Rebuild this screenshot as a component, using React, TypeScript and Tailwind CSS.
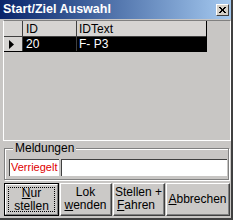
import React from "react";

const font = { fontFamily: '"Liberation Sans", Arial, sans-serif' };

function Btn({ children, def }: { children: React.ReactNode; def?: boolean }) {
  return (
    <div
      className={
        "h-full flex items-center justify-center text-[12px] leading-[13px] text-black text-center bg-[#cbc9c7] " +
        (def
          ? "border border-black"
          : "border-t border-l border-t-white border-l-white border-r border-b border-r-[#404040] border-b-[#404040]")
      }
    >
      {def ? (
        <div className="w-full h-full border-t border-l border-t-white border-l-white border-r border-b border-r-[#808080] border-b-[#808080] p-[2px]">
          <div className="w-full h-full border border-dotted border-black flex flex-col items-center justify-center">
            {children}
          </div>
        </div>
      ) : (
        <div className="w-full h-full border-r border-b border-r-[#808080] border-b-[#808080] flex flex-col items-center justify-center">
          {children}
        </div>
      )}
    </div>
  );
}

export default function App() {
  return (
    <div
      className="w-[233px] h-[220px] bg-[#c8c6c4] overflow-hidden flex flex-col border-r-2 border-b-2 border-r-[#404040] border-b-[#404040]"
      style={font}
    >
      {/* Title bar */}
      <div className="h-[19px] shrink-0 flex items-center justify-between bg-gradient-to-r from-[#0a246a] to-[#a6caf0] pl-[3px] pr-[2px]">
        <span className="text-white font-bold text-[12.5px] leading-none">Start/Ziel Auswahl</span>
        <div className="w-[13px] h-[12px] bg-[#d4d0c8] border-t border-l border-t-white border-l-white border-r border-b border-r-[#404040] border-b-[#404040] flex items-center justify-center">
          <svg width="7" height="6" viewBox="0 0 7 6">
            <path d="M0 0 L6 6 M1 0 L7 6 M6 0 L0 6 M7 0 L1 6" stroke="black" strokeWidth="1" />
          </svg>
        </div>
      </div>

      {/* Grid */}
      <div className="mt-[1px] ml-[3px] w-[228px] h-[121px] shrink-0 border border-t-[#808080] border-l-white border-r-white border-b-white bg-[#c8c6c4]">
        <div className="w-[203px] border-r border-b border-black text-[12px] leading-none">
          <div className="flex h-[16px] bg-[#d6d4d2] border-b border-[#404040]">
            <div className="w-[19px] border-r border-[#404040]" />
            <div className="w-[54px] border-r border-[#404040] pl-[3px] flex items-center">ID</div>
            <div className="flex-1 pl-[2px] flex items-center">IDText</div>
          </div>
          <div className="flex h-[14px]">
            <div className="w-[19px] bg-[#d6d4d2] border-r border-[#404040] flex items-center pl-[5px]">
              <svg width="5" height="9" viewBox="0 0 5 9">
                <path d="M0 0 L5 4.5 L0 9 Z" fill="black" />
              </svg>
            </div>
            <div className="w-[54px] bg-black text-white border-r border-[#404040] pl-[3px] flex items-center">20</div>
            <div className="flex-1 bg-black text-white pl-[2px] flex items-center">F- P3</div>
          </div>
        </div>
      </div>

      {/* Meldungen group */}
      <div className="relative mt-[7px] ml-[4px] w-[225px] h-[32px] shrink-0 border border-[#808080] shadow-[inset_1px_1px_0_white,1px_1px_0_white]">
        <span className="absolute -top-[8px] left-[8px] px-[2px] bg-[#c8c6c4] text-[12px] leading-[14px] text-black">Meldungen</span>
        <div className="flex gap-[2px] mt-[10px] ml-[4px] h-[17px]">
          <div className="w-[50px] bg-white border-t border-l border-[#404040] text-[#e00000] text-[11px] leading-[15px] pl-[1px] whitespace-nowrap overflow-hidden">
            Verriegelt
          </div>
          <div className="w-[166px] bg-white border-t border-l border-[#404040]" />
        </div>
      </div>

      {/* Buttons */}
      <div className="flex mt-[3px] ml-[4px] h-[33px] shrink-0 gap-[1px]">
        <div className="w-[55px]">
          <Btn def>
            <span><u>N</u>ur</span>
            <span>stellen</span>
          </Btn>
        </div>
        <div className="w-[52px]">
          <Btn>
            <span>Lok</span>
            <span><u>w</u>enden</span>
          </Btn>
        </div>
        <div className="w-[52px]">
          <Btn>
            <span>Stellen +</span>
            <span className="self-start pl-[3px]"><u>F</u>ahren</span>
          </Btn>
        </div>
        <div className="w-[64px]">
          <Btn>
            <span><u>A</u>bbrechen</span>
          </Btn>
        </div>
      </div>
    </div>
  );
}
